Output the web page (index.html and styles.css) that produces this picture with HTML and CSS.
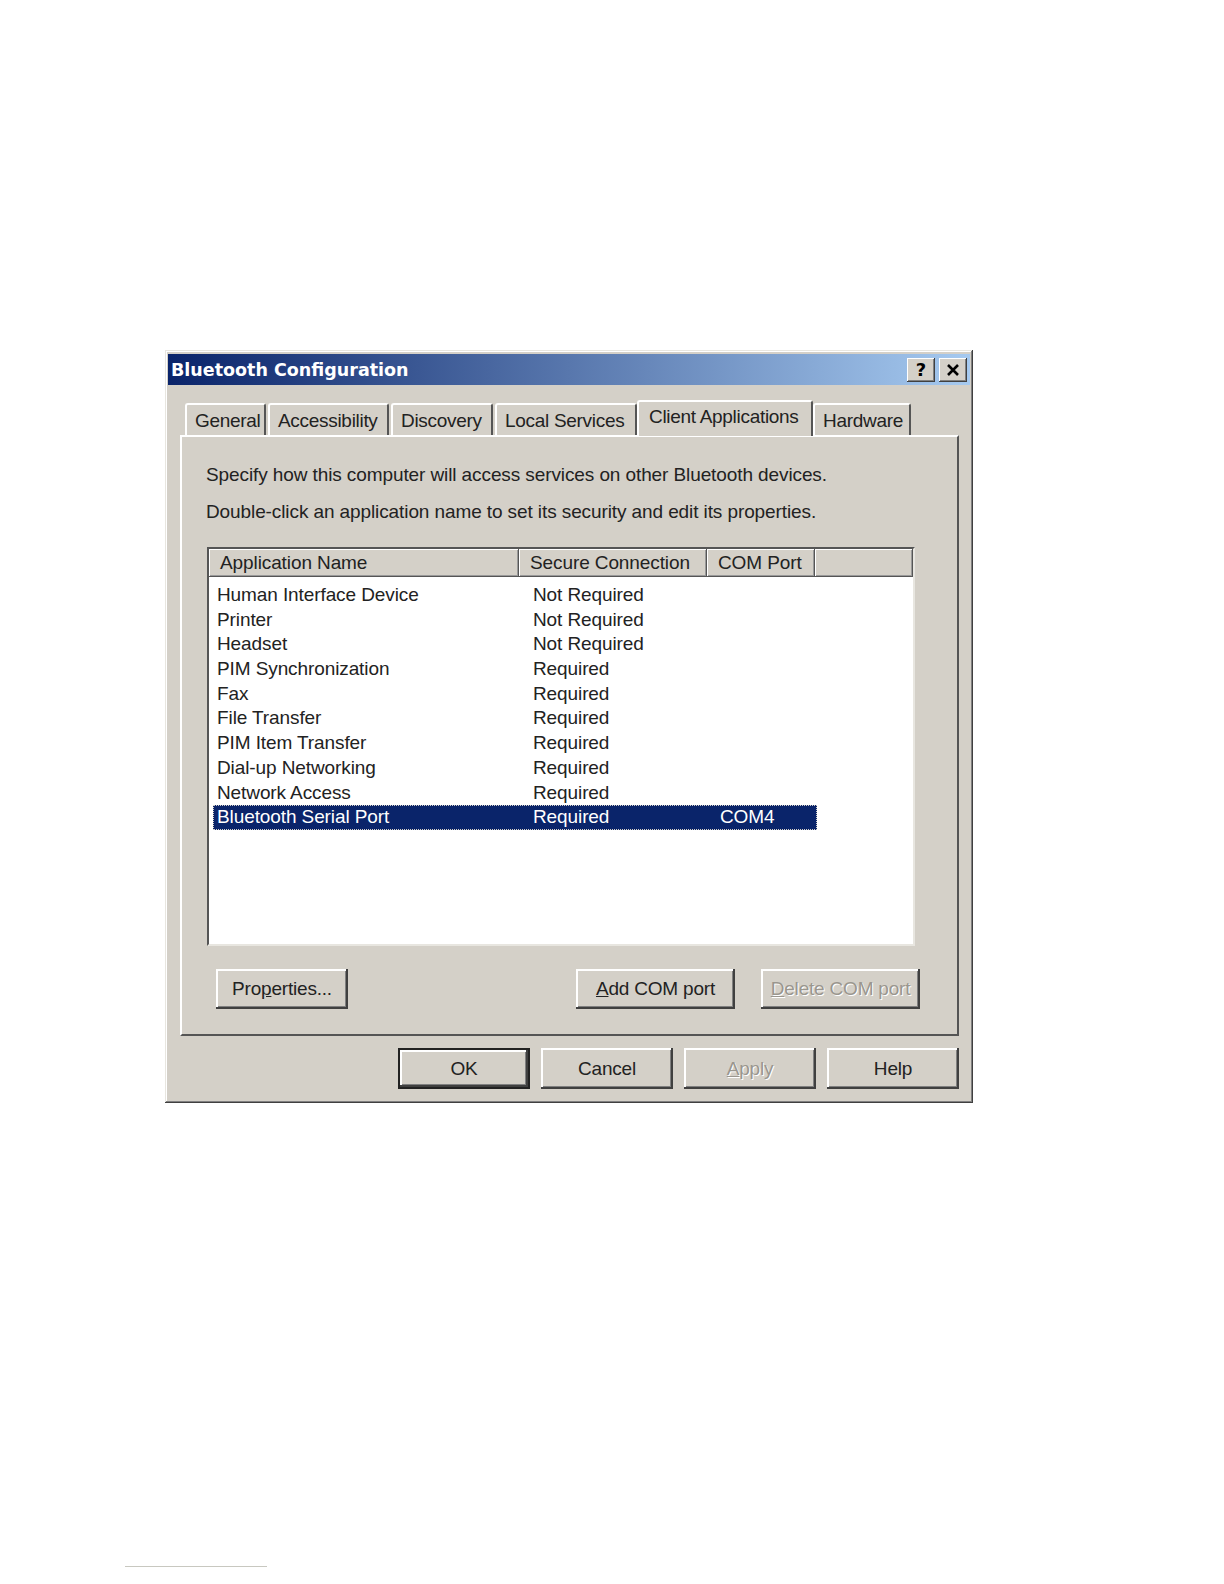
FILE: index.html
```html
<!DOCTYPE html>
<html>
<head>
    <title>Bluetooth Configuration</title>
    <meta http-equiv="Content-Type" content="text/html; charset=utf-8" />
    <link rel="stylesheet" href="styles.css">
</head>

<body>
    <div class="dialog">
        <div class="titlebar">
            <span class="title">Bluetooth Configuration</span>
            <div class="caption-btns">
                <span class="cap-btn">?</span>
                <span class="cap-btn">
                    <svg width="14" height="12" viewBox="0 0 14 12">
                        <path d="M2 1 L12 11 M12 1 L2 11" stroke="#000" stroke-width="2.6" fill="none"/>
                    </svg>
                </span>
            </div>
        </div>

        <div class="tabs">
            <div class="tab" style="width: 81px;">General</div>
            <div class="tab" style="width: 121px;">Accessibility</div>
            <div class="tab" style="width: 102px;">Discovery</div>
            <div class="tab" style="width: 142px;">Local Services</div>
            <div class="tab active" style="width: 176px;">Client Applications</div>
            <div class="tab" style="width: 98px;">Hardware</div>
        </div>

        <div class="panel">
            <p class="intro">Specify how this computer will access services on other Bluetooth devices.</p>
            <p class="intro">Double-click an application name to set its security and edit its properties.</p>

            <div class="listview">
                <div class="lv-head">
                    <div class="lv-col" style="width: 310px;">Application Name</div>
                    <div class="lv-col" style="width: 188px;">Secure Connection</div>
                    <div class="lv-col" style="width: 108px;">COM Port</div>
                    <div class="lv-col lv-fill"></div>
                </div>
                <div class="lv-body">
                    <div class="lv-row"><span class="c1">Human Interface Device</span><span class="c2">Not Required</span><span class="c3"></span></div>
                    <div class="lv-row"><span class="c1">Printer</span><span class="c2">Not Required</span><span class="c3"></span></div>
                    <div class="lv-row"><span class="c1">Headset</span><span class="c2">Not Required</span><span class="c3"></span></div>
                    <div class="lv-row"><span class="c1">PIM Synchronization</span><span class="c2">Required</span><span class="c3"></span></div>
                    <div class="lv-row"><span class="c1">Fax</span><span class="c2">Required</span><span class="c3"></span></div>
                    <div class="lv-row"><span class="c1">File Transfer</span><span class="c2">Required</span><span class="c3"></span></div>
                    <div class="lv-row"><span class="c1">PIM Item Transfer</span><span class="c2">Required</span><span class="c3"></span></div>
                    <div class="lv-row"><span class="c1">Dial-up Networking</span><span class="c2">Required</span><span class="c3"></span></div>
                    <div class="lv-row"><span class="c1">Network Access</span><span class="c2">Required</span><span class="c3"></span></div>
                    <div class="lv-row selected"><span class="c1">Bluetooth Serial Port</span><span class="c2">Required</span><span class="c3">COM4</span></div>
                </div>
            </div>

            <div class="panel-btns">
                <button class="btn">Pro<u>p</u>erties...</button>
                <div class="spacer"></div>
                <button class="btn wide"><u>A</u>dd COM port</button>
                <button class="btn wide disabled"><u>D</u>elete COM port</button>
            </div>
        </div>

        <div class="dialog-btns">
            <button class="btn default">OK</button>
            <button class="btn">Cancel</button>
            <button class="btn disabled"><u>A</u>pply</button>
            <button class="btn">Help</button>
        </div>
    </div>

    <div class="footnote-rule"></div>
</body>
</html>
```

FILE: styles.css
```css
body {
    margin: 0;
    background-color: #fff;
    font-family: "Liberation Sans", Arial, sans-serif;
    font-size: 19px;
    color: #000;
}
.dialog {
    box-sizing: border-box;
    width: 808px;
    height: 753px;
    margin: 350px 0 0 165px;
    padding: 4px 3px 3px 3px;
    background-color: #d4d0c8;
    box-shadow: inset -1px -1px #404040, inset 1px 1px #e8e6e0, inset -2px -2px #808080, inset 2px 2px #fff;
}
.titlebar {
    height: 31px;
    display: flex;
    align-items: center;
    justify-content: space-between;
    background: linear-gradient(to right, #0a246a, #a6caf0);
    padding: 0 3px 0 3px;
}
.title {
    font-family: "DejaVu Sans", Tahoma, sans-serif;
    font-weight: bold;
    font-size: 17.5px;
    color: #fff;
}
.caption-btns {
    display: flex;
    gap: 4px;
}
.cap-btn {
    box-sizing: border-box;
    width: 28px;
    height: 24px;
    display: flex;
    align-items: center;
    justify-content: center;
    background-color: #d4d0c8;
    font-family: "DejaVu Sans", sans-serif;
    font-weight: bold;
    font-size: 18px;
    box-shadow: inset -1px -1px #404040, inset 1px 1px #fff, inset -2px -2px #808080;
}
.tabs {
    display: flex;
    align-items: flex-end;
    gap: 2px;
    height: 50px;
    margin-left: 17px;
}
.tab {
    box-sizing: border-box;
    height: 32px;
    padding: 5px 0 0 8px;
    background-color: #d4d0c8;
    white-space: nowrap;
    letter-spacing: -0.3px;
    color: #222;
    border-top: 2px solid #fff;
    border-left: 2px solid #fff;
    border-right: 2px solid #555;
    border-radius: 3px 3px 0 0;
}
.tab.active {
    height: 36px;
    padding-top: 4px;
    margin: 0 -2px -1px -2px;
    position: relative;
    z-index: 1;
    padding-left: 10px;
}
.panel {
    box-sizing: border-box;
    width: 779px;
    height: 601px;
    margin-left: 12px;
    padding: 26px 0 0 25px;
    border-top: 2px solid #fff;
    border-left: 2px solid #fff;
    border-right: 2px solid #555;
    border-bottom: 2px solid #555;
}
.intro {
    margin: 0 0 13px -1px;
    line-height: 24px;
    letter-spacing: -0.1px;
    color: #222;
}
.listview {
    box-sizing: border-box;
    width: 708px;
    height: 399px;
    margin-top: 23px;
    background-color: #fff;
    border-top: 2px solid #555;
    border-left: 2px solid #555;
    border-right: 2px solid #e8e6e0;
    border-bottom: 2px solid #e8e6e0;
}
.lv-head {
    display: flex;
    height: 28px;
}
.lv-col {
    box-sizing: border-box;
    height: 28px;
    padding: 3px 0 0 11px;
    background-color: #d4d0c8;
    white-space: nowrap;
    letter-spacing: -0.1px;
    color: #222;
    box-shadow: inset -1px -1px #555, inset 1px 1px #fff, inset -2px -2px #999;
}
.lv-fill {
    flex: 1;
}
.lv-body {
    padding: 6px 0 0 4px;
}
.lv-row {
    display: flex;
    width: 604px;
    height: 24.7px;
    line-height: 24px;
    letter-spacing: -0.1px;
    color: #222;
}
.lv-row span {
    box-sizing: border-box;
    padding-left: 4px;
    white-space: nowrap;
}
.c1 {
    width: 316px;
}
.c2 {
    width: 187px;
}
.c3 {
    flex: 1;
}
.lv-row.selected {
    background-color: #0a246a;
    color: #fff;
    outline: 1px dotted #d4d0c8;
    outline-offset: -1px;
}
.panel-btns {
    display: flex;
    width: 704px;
    margin: 23px 0 0 9px;
    gap: 26px;
}
.spacer {
    flex: 1;
}
.btn {
    box-sizing: border-box;
    width: 132px;
    height: 40px;
    border: none;
    background-color: #d4d0c8;
    font-family: "Liberation Sans", Arial, sans-serif;
    font-size: 19px;
    letter-spacing: -0.2px;
    color: #222;
    padding: 0;
    box-shadow: inset -2px -2px #404040, inset 2px 2px #fff, inset -3px -3px #808080;
}
.btn.wide {
    width: 159px;
}
.btn.disabled {
    color: #9a968e;
    text-shadow: 1px 1px #fff;
}
.btn.default {
    border: 2px solid #222;
}
.dialog-btns {
    display: flex;
    justify-content: flex-end;
    gap: 11px;
    margin: 12px 11px 0 0;
}
.dialog-btns .btn {
    height: 41px;
}
.footnote-rule {
    width: 142px;
    height: 1px;
    margin: 463px 0 0 125px;
    background-color: #c8c8c0;
}
```
